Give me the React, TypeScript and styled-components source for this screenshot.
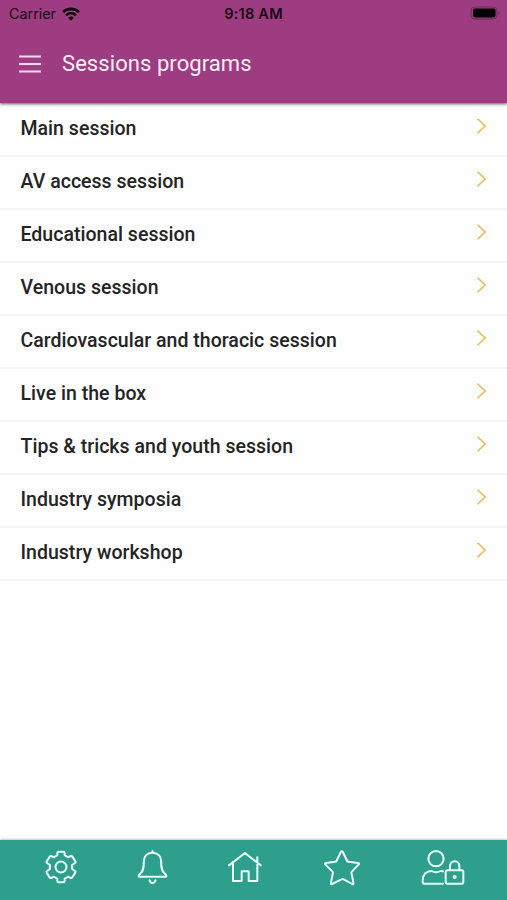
import React from "react";
import styled, { createGlobalStyle } from "styled-components";

const GlobalStyle = createGlobalStyle`
  * { box-sizing: border-box; }
  body { margin: 0; background: #fefefe; font-family: Roboto, "Liberation Sans", sans-serif; }
`;

const Screen = styled.div`
  display: flex;
  flex-direction: column;
  height: 100vh;
  overflow: hidden;
`;

const Header = styled.header`
  flex: 0 0 103px;
  position: relative;
  background: #9e3c81;
  box-shadow: 0 1px 3px rgba(0, 0, 0, 0.65);
`;

const StatusBar = styled.div`
  display: grid;
  grid-template-columns: 1fr auto 1fr;
  align-items: center;
  height: 27px;
  padding: 0 6px 0 9px;
  color: #160812;
`;

const Carrier = styled.div`
  display: flex;
  align-items: center;
  gap: 6.5px;
  font: 400 14.4px/18px Inter, sans-serif;
  letter-spacing: -0.03px;
`;

const Clock = styled.time`
  margin-right: 3px;
  font: 600 14.6px/18px Inter, sans-serif;
  letter-spacing: 0.2px;
`;

const Battery = styled.div`
  display: flex;
  justify-content: flex-end;
  padding-bottom: 1px;
`;

const TitleBar = styled.div`
  display: flex;
  align-items: center;
  gap: 20px;
  height: 73px;
  padding-left: 19px;
`;

const MenuButton = styled.button`
  display: flex;
  padding: 0;
  border: 0;
  background: none;
`;

const Title = styled.h1`
  margin: 0;
  color: #fbeef8;
  font-size: 22px;
  font-weight: 400;
  line-height: 28px;
  letter-spacing: 0.07px;
`;

const List = styled.ul`
  flex: 1;
  margin: 0;
  padding: 1px 0 0;
  list-style: none;
`;

const Row = styled.li`
  display: flex;
  justify-content: space-between;
  height: 53px;
  padding: 12px 20px 0 20.5px;
  border-bottom: 2px solid #f4f4f4;
  color: #242424;
  font-size: 19.5px;
  font-weight: 500;
  line-height: 26px;
  letter-spacing: 0.025px;
`;

const Chevron = styled.svg`
  width: 11px;
  height: 18px;
  margin-top: 1px;
`;

const TabBar = styled.nav`
  flex: 0 0 60px;
  display: flex;
  justify-content: space-between;
  padding: 7px 42.5px 0 43px;
  background: #2d9f8c;
  box-shadow: 0 -1px 2px rgba(0, 0, 0, 0.22);
`;

const Tab = styled.button`
  display: flex;
  height: 40px;
  padding: 0;
  border: 0;
  background: none;
`;

const LineIcon = styled.svg`
  fill: none;
  stroke: #e9fffa;
  stroke-width: 6;
  stroke-linecap: round;
  stroke-linejoin: round;
`;

const sessions = [
  "Main session",
  "AV access session",
  "Educational session",
  "Venous session",
  "Cardiovascular and thoracic session",
  "Live in the box",
  "Tips & tricks and youth session",
  "Industry symposia",
  "Industry workshop",
];

const tabs = [
  {
    label: "Settings",
    width: 36,
    shift: 0,
    art: (
      <>
        <path d="M47 5h14q4 0 4 4v7q6 2 10 6l8-4q3-1 5 2l9 14q2 3-1 5l-9 6q1 6 0 12l9 6q3 2 1 5l-9 14q-2 3-5 2l-8-4q-4 4-10 6v7q0 4-4 4H47q-4 0-4-4v-7q-6-2-10-6l-8 4q-3 1-5-2l-9-14q-2-3 1-5l9-6q-1-6 0-12l-9-6q-3-2-1-5l9-14q2-3 5-2l8 4q4-4 10-6V9q0-4 4-4z" />
        <circle cx="54" cy="51" r="16.5" />
      </>
    ),
  },
  {
    label: "Notifications",
    width: 32,
    shift: 4.5,
    art: (
      <>
        <path d="M48 3v5C32 8 22 19 22 33c0 20-1 29-10 37-5 4-8 9-4 10h80c4-1 1-6-4-10-9-8-10-17-10-37C74 19 64 8 48 8" />
        <path d="M39 91q2 8 9 8t9-8" />
      </>
    ),
  },
  {
    label: "Home",
    width: 36,
    shift: 6,
    art: (
      <path d="M6 46 54 9l47 37M18 38v55h26V64h21v29h26V38M91 35V22" />
    ),
  },
  {
    label: "Favourites",
    width: 37,
    shift: -0.5,
    art: (
      <path d="M52 4q3-1 4 2l13 27q1 2 4 2l29 4q5 1 1 5L83 65q-2 2-1 5l6 29q0 5-4 3L59 88q-4-2-7 0L24 102q-4 2-4-3l6-29q1-3-1-5L4 44q-4-4 1-5l28-4q3 0 4-2L50 6q1-2 2-2z" />
    ),
  },
  {
    label: "Account",
    width: 44,
    shift: 0,
    art: (
      <>
        <circle cx="45" cy="26" r="23" />
        <path d="M66 101H9q-4 0-4-5v-5c0-17 11-28 27-28q13 8 27 0l7 1" />
        <rect x="74" y="61" width="53" height="40" rx="6" />
        <path d="M87 60V48a14 14 0 0 1 28 0v12" />
        <circle cx="101" cy="81" r="3.2" fill="#e9fffa" />
      </>
    ),
  },
];

export default function App() {
  return (
    <Screen>
      <GlobalStyle />
      <Header>
        <StatusBar>
          <Carrier>
            Carrier
            <svg width="18" height="14" viewBox="0 0 18 14" fill="none" stroke="#090207" strokeWidth="2.6">
              <path d="M1 5.1C5.5.8 12.5.8 17 5.1M4 8.2c2.9-2.7 7.1-2.7 10 0" />
              <path d="M6.2 10.7q2.8-2.2 5.6 0L9 13.7z" fill="#090207" stroke="none" />
            </svg>
          </Carrier>
          <Clock>9:18 AM</Clock>
          <Battery>
            <svg width="31" height="14" viewBox="0 0 31 14">
              <rect x="1" y="1" width="26" height="12" rx="3.5" fill="none" stroke="#70285d" />
              <rect x="3" y="2.5" width="22.5" height="9" rx="2" fill="#000" />
              <path d="M28.5 5q2.4 2 0 4z" fill="#70285d" />
            </svg>
          </Battery>
        </StatusBar>
        <TitleBar>
          <MenuButton aria-label="Menu">
            <svg width="23" height="20" viewBox="0 0 23 20" stroke="#f6d9ed" strokeWidth="2">
              <path d="M0 2.5h22M0 10h22M0 17.5h22" />
            </svg>
          </MenuButton>
          <Title>Sessions programs</Title>
        </TitleBar>
      </Header>
      <List>
        {sessions.map((name) => (
          <Row key={name}>
            {name}
            <Chevron viewBox="0 0 11 18" fill="none" stroke="#edb74d" strokeWidth="1.5">
              <path d="m1.5 1.7 7.7 7.3-7.7 7.3" />
            </Chevron>
          </Row>
        ))}
      </List>
      <TabBar>
        {tabs.map(({ label, width, shift, art }) => (
          <Tab key={label} aria-label={label}>
            <LineIcon width={width} height="40" viewBox={`${shift} -9 ${width * 3} 120`} overflow="visible">
              {art}
            </LineIcon>
          </Tab>
        ))}
      </TabBar>
    </Screen>
  );
}
